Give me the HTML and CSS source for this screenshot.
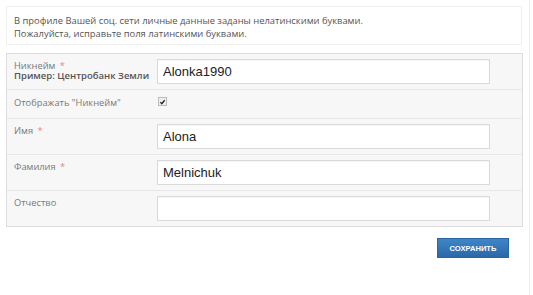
FILE: index.html
```html
<!DOCTYPE html>
<html lang="ru">
<head>
<meta charset="utf-8">
<link rel="stylesheet" href="styles.css">
</head>
<body>
<div class="page">
  <div class="notice">
    В профиле Вашей соц. сети личные данные заданы нелатинскими буквами.<br>
    Пожалуйста, исправьте поля латинскими буквами.
  </div>
  <div class="form">
    <div class="row">
      <div class="label">Никнейм <span class="req">*</span><br><span class="hint">Пример: Центробанк Земли</span></div>
      <div class="field"><input class="input" type="text" value="Alonka1990"></div>
    </div>
    <div class="row row-check">
      <div class="label">Отображать "Никнейм"</div>
      <div class="field"><span class="check"><svg viewBox="0 0 8 8" width="8" height="8"><path d="M1.6 4.2 L3.2 5.9 L6.4 2" fill="none" stroke="#222" stroke-width="1.5"/></svg></span></div>
    </div>
    <div class="row">
      <div class="label">Имя <span class="req">*</span></div>
      <div class="field"><input class="input" type="text" value="Alona"></div>
    </div>
    <div class="row">
      <div class="label">Фамилия <span class="req">*</span></div>
      <div class="field"><input class="input" type="text" value="Melnichuk"></div>
    </div>
    <div class="row">
      <div class="label">Отчество</div>
      <div class="field"><input class="input" type="text" value=""></div>
    </div>
  </div>
  <div class="actions">
    <button class="btn">СОХРАНИТЬ</button>
  </div>
</div>
</body>
</html>
```
FILE: styles.css
```css
html, body { margin: 0; padding: 0; background: #fff; }
body { width: 533px; height: 295px; overflow: hidden; }
.page {
  width: 530px;
  height: 295px;
  padding: 6px 0 0 6px;
  box-sizing: border-box;
  border-right: 1px solid #ececec;
  font-family: "Open Sans", sans-serif;
}
.notice {
  width: 516px;
  box-sizing: border-box;
  height: 39px;
  border: 1px solid #f0f0f0;
  padding: 7px 7px 0;
  font-size: 9.4px;
  line-height: 13px;
  color: #555;
}
.form {
  margin-top: 8px;
  width: 517px;
  box-sizing: border-box;
  border: 1px solid #dcdcdc;
  background: #f7f7f7;
}
.row {
  display: flex;
  border-top: 1px solid #e8e8e8;
  padding: 5px 0;
}
.row:first-child { border-top: none; }
.row-check { height: 18px; }
.label {
  width: 143px;
  padding-left: 7px;
  padding-top: 2px;
  font-size: 9.3px;
  line-height: 10px;
  color: #777;
}
.row-check .label { padding-top: 3px; }
.req { color: #e08888; margin-left: 2px; }
.hint { color: #555; font-weight: 600; font-size: 9.5px; }
.field { flex: none; }
.input {
  display: block;
  width: 333px;
  height: 25px;
  box-sizing: border-box;
  border: 1px solid #dadada;
  box-shadow: inset 0 1px 1px rgba(0,0,0,0.04);
  background: #fff;
  padding: 0 5px;
  margin: 0;
  font-family: "Liberation Sans", Arial, sans-serif;
  font-size: 13px;
  color: #222;
  outline: none;
}
.check {
  display: flex;
  align-items: center;
  justify-content: center;
  width: 7px;
  height: 7px;
  margin-top: 2px;
  margin-left: 1px;
  border: 1px solid #bbb;
  background: #eee;
}
.actions {
  display: flex;
  justify-content: flex-end;
  width: 503px;
  margin-top: 11px;
}
.btn {
  width: 72px;
  height: 20px;
  border: 1px solid #2b64a0;
  background: linear-gradient(#3e86c8, #2a68a8);
  color: #fff;
  font-family: "Liberation Sans", Arial, sans-serif;
  font-weight: bold;
  font-size: 7.6px;
  padding: 0;
}
```
